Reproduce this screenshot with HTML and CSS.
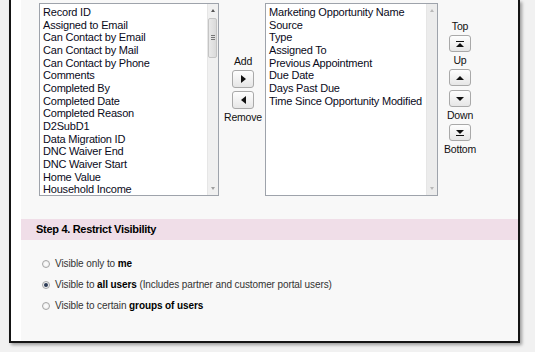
FILE: index.html
```html
<!DOCTYPE html>
<html>
<head>
    <meta charset="utf-8" />
    <title>Visibility</title>
    <link rel="stylesheet" href="styles.css">
</head>
<body>
    <div class="frame">
        <div class="inner">
            <div class="picker">
                <div class="listbox list-available">
                    <ul class="items">
                        <li>Record ID</li>
                        <li>Assigned to Email</li>
                        <li>Can Contact by Email</li>
                        <li>Can Contact by Mail</li>
                        <li>Can Contact by Phone</li>
                        <li>Comments</li>
                        <li>Completed By</li>
                        <li>Completed Date</li>
                        <li>Completed Reason</li>
                        <li>D2SubD1</li>
                        <li>Data Migration ID</li>
                        <li>DNC Waiver End</li>
                        <li>DNC Waiver Start</li>
                        <li>Home Value</li>
                        <li>Household Income</li>
                    </ul>
                    <div class="scrollbar">
                        <span class="arrow arrow-up"></span>
                        <span class="thumb"><span class="grip"></span></span>
                        <span class="arrow arrow-down"></span>
                    </div>
                </div>
                <div class="move-col">
                    <div class="label">Add</div>
                    <button class="btn btn-move"><span class="tri tri-right"></span></button>
                    <button class="btn btn-move btn-gap"><span class="tri tri-left"></span></button>
                    <div class="label">Remove</div>
                </div>
                <div class="listbox list-selected">
                    <ul class="items">
                        <li>Marketing Opportunity Name</li>
                        <li>Source</li>
                        <li>Type</li>
                        <li>Assigned To</li>
                        <li>Previous Appointment</li>
                        <li>Due Date</li>
                        <li>Days Past Due</li>
                        <li>Time Since Opportunity Modified</li>
                    </ul>
                    <div class="scrollbar disabled">
                        <span class="arrow arrow-up"></span>
                        <span class="arrow arrow-down"></span>
                    </div>
                </div>
                <div class="order-col">
                    <div class="label">Top</div>
                    <button class="btn btn-order"><span class="bar"></span><span class="tri tri-up"></span></button>
                    <div class="label">Up</div>
                    <button class="btn btn-order"><span class="tri tri-up"></span></button>
                    <button class="btn btn-order btn-gap"><span class="tri tri-down"></span></button>
                    <div class="label">Down</div>
                    <button class="btn btn-order btn-gap"><span class="tri tri-down"></span><span class="bar"></span></button>
                    <div class="label">Bottom</div>
                </div>
            </div>

            <h3 class="step-title">Step 4. Restrict Visibility</h3>

            <div class="options">
                <label class="option"><span class="radio"></span>Visible only to <b>me</b></label>
                <label class="option"><span class="radio checked"></span>Visible to <b>all users</b> (Includes partner and customer portal users)</label>
                <label class="option"><span class="radio"></span>Visible to certain <b>groups of users</b></label>
            </div>
        </div>
    </div>
</body>
</html>
```

FILE: styles.css
```css
*, *:before, *:after{
    box-sizing:border-box;
}
html, body{
    margin:0;
    height:100%;
}
body{
    background:#f1f1f1;
    font-family:"Liberation Sans", Arial, sans-serif;
    font-size:11px;
    color:#000;
    overflow:hidden;
}
.frame{
    margin-left:9px;
    width:511px;
    height:343px;
    border:2px solid #151515;
    border-top:none;
    background:#fff;
    padding-left:10px;
    box-shadow:2px 2px 3px rgba(0,0,0,0.35);
}
.inner{
    height:100%;
    background:#f8f8f8;
}
.picker{
    display:flex;
    align-items:flex-start;
    padding:3px 0 0 18px;
}
.listbox{
    position:relative;
    height:193px;
    background:#fff;
    border:1px solid #9ea3ab;
}
.list-available{
    width:180px;
}
.list-selected{
    width:173px;
    margin-left:10px;
}
.items{
    list-style:none;
    margin:0;
    padding:2px 0 0 3px;
    line-height:12.65px;
    letter-spacing:-0.2px;
    color:#0a0a1a;
}
    .items li{
        white-space:nowrap;
    }
.scrollbar{
    position:absolute;
    top:0;
    right:0;
    bottom:0;
    width:11px;
    background:#f0f0f0;
    border-left:1px solid #e6e6e6;
}
    .scrollbar.disabled{
        background:#ececec;
    }
.arrow{
    position:absolute;
    left:3px;
    width:0;
    height:0;
    border-left:2px solid transparent;
    border-right:2px solid transparent;
}
.arrow-up{
    top:5px;
    border-bottom:3px solid #555;
}
.arrow-down{
    bottom:5px;
    border-top:3px solid #a0a0a0;
}
.disabled .arrow-up{
    border-bottom-color:#b8b8b8;
}
.disabled .arrow-down{
    border-top-color:#b8b8b8;
}
.thumb{
    position:absolute;
    top:14px;
    left:0;
    width:9px;
    height:40px;
    background:linear-gradient(to right, #e9e9e9, #dadada);
    border:1px solid #c4c4c4;
    border-radius:2px;
}
.grip{
    position:absolute;
    top:16px;
    left:2px;
    width:4px;
    height:5px;
    border-top:1px solid #777;
    border-bottom:1px solid #777;
}
    .grip:after{
        content:"";
        position:absolute;
        top:1px;
        left:0;
        width:4px;
        border-top:1px solid #777;
    }
.move-col,
.order-col{
    display:flex;
    flex-direction:column;
    align-items:center;
}
.move-col{
    width:24px;
    margin-left:12px;
    padding-top:52px;
}
.order-col{
    width:22px;
    margin-left:11px;
    padding-top:17px;
}
.label{
    line-height:13px;
    white-space:nowrap;
    color:#111;
    font-size:10.5px;
    letter-spacing:-0.2px;
}
.btn{
    display:flex;
    flex-direction:column;
    align-items:center;
    justify-content:center;
    gap:1px;
    width:22px;
    padding:0;
    margin:2px 0;
    background:linear-gradient(#fefefe, #e6e6e6);
    border:1px solid #a9a9a9;
    border-radius:3px;
}
.btn-move{
    height:18px;
}
.btn-order{
    height:17px;
}
.btn-gap{
    margin-top:1px;
}
.order-col .btn-gap{
    margin-top:2px;
}
.tri{
    width:0;
    height:0;
}
.tri-right{
    border-top:4px solid transparent;
    border-bottom:4px solid transparent;
    border-left:5px solid #111;
}
.tri-left{
    border-top:4px solid transparent;
    border-bottom:4px solid transparent;
    border-right:5px solid #111;
}
.tri-up{
    border-left:4px solid transparent;
    border-right:4px solid transparent;
    border-bottom:4px solid #111;
}
.tri-down{
    border-left:4px solid transparent;
    border-right:4px solid transparent;
    border-top:4px solid #111;
}
.bar{
    width:8px;
    height:1px;
    background:#111;
}
.step-title{
    margin:23px 0 0 0;
    height:21px;
    line-height:21px;
    padding-left:15px;
    font-size:11px;
    letter-spacing:-0.3px;
    background:#f0dee8;
}
.options{
    padding:13px 0 0 21px;
}
.option{
    display:flex;
    align-items:center;
    height:21px;
    color:#333;
    font-size:10px;
    letter-spacing:-0.1px;
    white-space:pre;
}
    .option b{
        color:#000;
    }
.radio{
    width:8px;
    height:8px;
    margin-right:5px;
    border:1px solid #a5a5a5;
    border-radius:50%;
    background:radial-gradient(#fff, #e8e8e8);
    position:relative;
}
    .radio.checked:after{
        content:"";
        position:absolute;
        top:1px;
        left:1px;
        width:4px;
        height:4px;
        border-radius:50%;
        background:#2b3a55;
    }
```
